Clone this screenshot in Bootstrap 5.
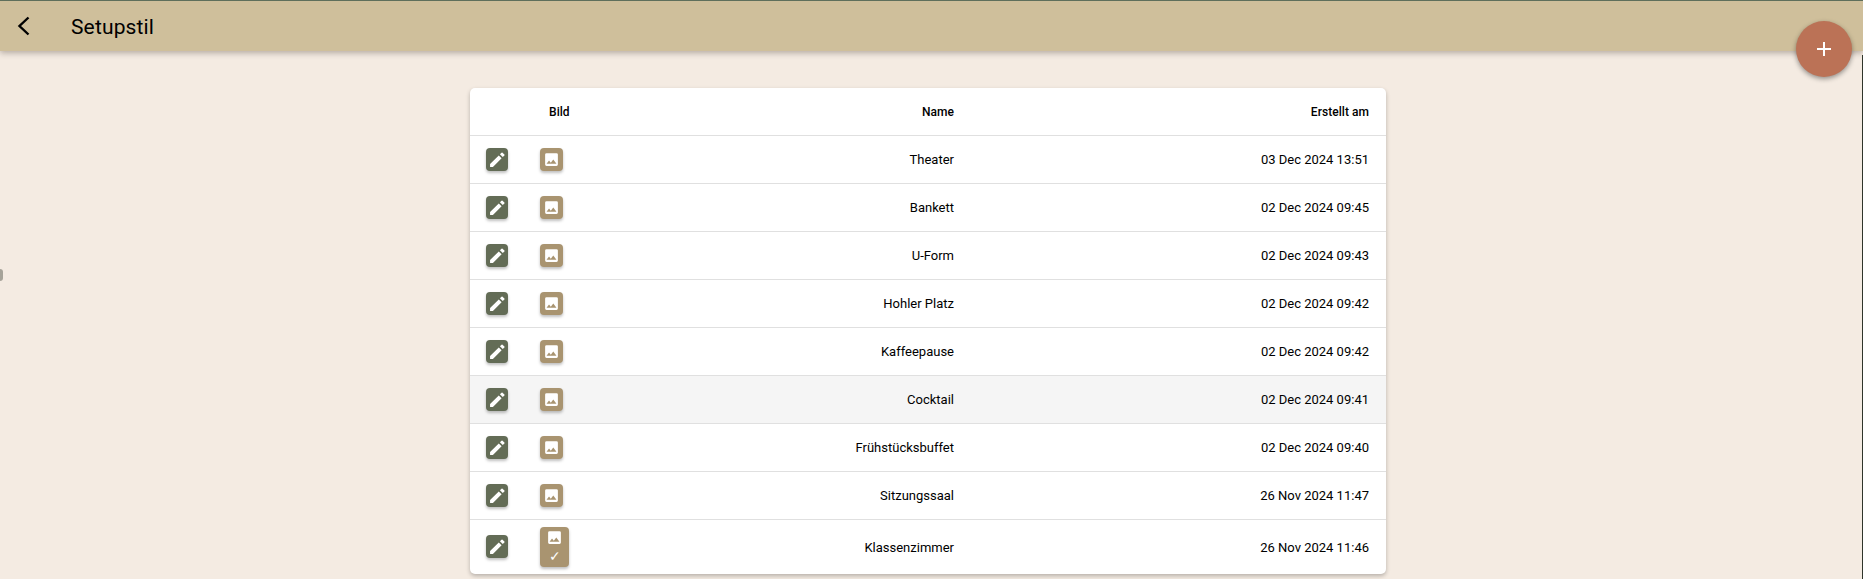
<!DOCTYPE html>
<html lang="de">
<head>
  <meta charset="UTF-8">
  <title>Setupstil</title>
  <link href="https://cdn.jsdelivr.net/npm/bootstrap@5.3.3/dist/css/bootstrap.min.css" rel="stylesheet">
  <style>
    html, body { height: 100%; overflow: hidden; }
    body { background: #f4ebe2; font-family: Roboto, "Liberation Sans", sans-serif; color: #000; }

    /* window edge on the right and the small handle on the left */
    .edge-line { position: absolute; top: 55px; right: 0; bottom: 0; width: 1px; background: #2f352b; z-index: 6; }
    .edge-handle { position: absolute; top: 269px; left: 0; width: 3px; height: 12px; border-radius: 0 3px 3px 0; background: rgba(70, 75, 65, .45); }

    .top-bar { height: 51px; background: #cfbf9b; border-top: 1px solid #5f6f5b; box-shadow: 0 2px 6px rgba(60, 50, 40, .35); padding-left: 16px; }
    .top-bar h1 { font-size: 21px; font-weight: 400; letter-spacing: .15px; margin: 2px 0 0 39px; line-height: 1; }
    .back-link { width: 16px; height: 20px; color: #000; }

    .add-fab { position: absolute; top: 21px; right: 11px; width: 56px; height: 56px; border: 0; border-radius: 50%; background: #bb7256; box-shadow: 0 2px 5px rgba(0, 0, 0, .4); z-index: 5; }

    .setup-card { width: 916px; margin: 37px 0 0 470px; background: #fff; border-radius: 5px; box-shadow: 0 2px 4px rgba(0, 0, 0, .25); overflow: hidden; }
    .setup-table { margin: 0; font-size: 13px; table-layout: fixed; }
    .setup-table th, .setup-table td { padding: 1px 16px 0; height: 48px; vertical-align: middle; text-align: right; border-bottom: 1px solid #e0e0e0; background: transparent; box-shadow: none; white-space: nowrap; color: #000; }
    .setup-table th { font-size: 12px; font-weight: 500; height: 47px; letter-spacing: .05px; }
    .setup-table th:last-child, .setup-table td:last-child { padding-right: 17px; }
    .setup-table tr:last-child td { border-bottom: 0; height: 55px; }
    .setup-table tr.row-hover td { background: #f5f5f5; }
    .setup-table .col-edit { width: 54px; padding-top: 0; text-align: left; }
    .setup-table .col-pic { width: 60px; padding: 0 0 0 16px; text-align: left; }
    .setup-table th.col-pic { padding: 1px 0 0 25px; }
    .setup-table .col-name { width: 386px; }

    .tile-btn { display: flex; flex-direction: column; align-items: center; justify-content: center; padding: 0; border: 0; border-radius: 4px; height: 23px; color: #fff; box-shadow: 0 2px 3px rgba(0, 0, 0, .25); }
    .tile-edit { width: 22px; background: #636c56; }
    .tile-pic { width: 23px; background: #a99470; }
    .tile-pic.is-set { width: 29px; height: 40px; }
    .tile-pic .tick { font-size: 14px; line-height: 15px; margin-top: 3px; font-weight: 300; }
  </style>
</head>
<body>
  <!-- Header -->
  <header class="top-bar d-flex align-items-center">
    <a class="back-link d-flex" href="#" aria-label="Zurück">
      <svg width="16" height="20" viewBox="0 0 16 20" fill="none" stroke="currentColor" stroke-width="2.4"><path d="M12.5 1.5 3.500 10l9 8.500"/></svg>
    </a>
    <h1>Setupstil</h1>
  </header>

  <button class="add-fab d-flex align-items-center justify-content-center" aria-label="Hinzufügen">
    <svg width="14" height="14" viewBox="0 0 14 14" fill="none" stroke="#fff" stroke-width="2"><path d="M7 0v14M0 7h14"/></svg>
  </button>

  <div class="edge-line"></div>
  <div class="edge-handle"></div>

  <svg class="d-none">
    <symbol id="ic-pencil" viewBox="0 0 24 24"><path fill="currentColor" d="M1.500 18.500V22.500h4L17.810 10.200l-4-4L1.500 18.500zM21.700 6.300a1 1 0 0 0 0-1.410l-2.590-2.590a1 1 0 0 0-1.410 0l-2.300 2.300 4 4 2.300-2.300z"/></symbol>
    <symbol id="ic-picture" viewBox="0 0 24 24"><path fill="currentColor" d="M21 19V5a2 2 0 0 0-2-2H5a2 2 0 0 0-2 2v14a2 2 0 0 0 2 2h14a2 2 0 0 0 2-2zM8.500 13.500l2.500 3 3.500-4.500 4.500 6H5l3.500-4.500z"/></symbol>
  </svg>

  <!-- Setup list -->
  <main class="setup-card">
    <table class="table setup-table">
      <thead>
        <tr>
          <th class="col-edit"></th>
          <th class="col-pic">Bild</th>
          <th class="col-name">Name</th>
          <th>Erstellt am</th>
        </tr>
      </thead>
      <tbody id="setupRows"></tbody>
    </table>
  </main>

  <script>
    const setups = [
      ['Theater', '03 Dec 2024 13:51'],
      ['Bankett', '02 Dec 2024 09:45'],
      ['U-Form', '02 Dec 2024 09:43'],
      ['Hohler Platz', '02 Dec 2024 09:42'],
      ['Kaffeepause', '02 Dec 2024 09:42'],
      ['Cocktail', '02 Dec 2024 09:41'],
      ['Frühstücksbuffet', '02 Dec 2024 09:40'],
      ['Sitzungssaal', '26 Nov 2024 11:47'],
      ['Klassenzimmer', '26 Nov 2024 11:46']
    ];

    // Build the rows, Cocktail is hovered and Klassenzimmer has a picture set
    document.getElementById('setupRows').innerHTML = setups.map(([name, created], i) => `
      <tr class="${name === 'Cocktail' ? 'row-hover' : ''}">
        <td class="col-edit"><button class="tile-btn tile-edit"><svg width="17" height="17"><use href="#ic-pencil"/></svg></button></td>
        <td class="col-pic">
          <button class="tile-btn tile-pic ${i === setups.length - 1 ? 'is-set' : ''}">
            <svg width="17" height="17"><use href="#ic-picture"/></svg>
            ${i === setups.length - 1 ? '<span class="tick">✓</span>' : ''}
          </button>
        </td>
        <td>${name}</td>
        <td>${created}</td>
      </tr>
    `).join('');
  </script>
  <script src="https://cdn.jsdelivr.net/npm/bootstrap@5.3.3/dist/js/bootstrap.bundle.min.js"></script>
</body>
</html>
